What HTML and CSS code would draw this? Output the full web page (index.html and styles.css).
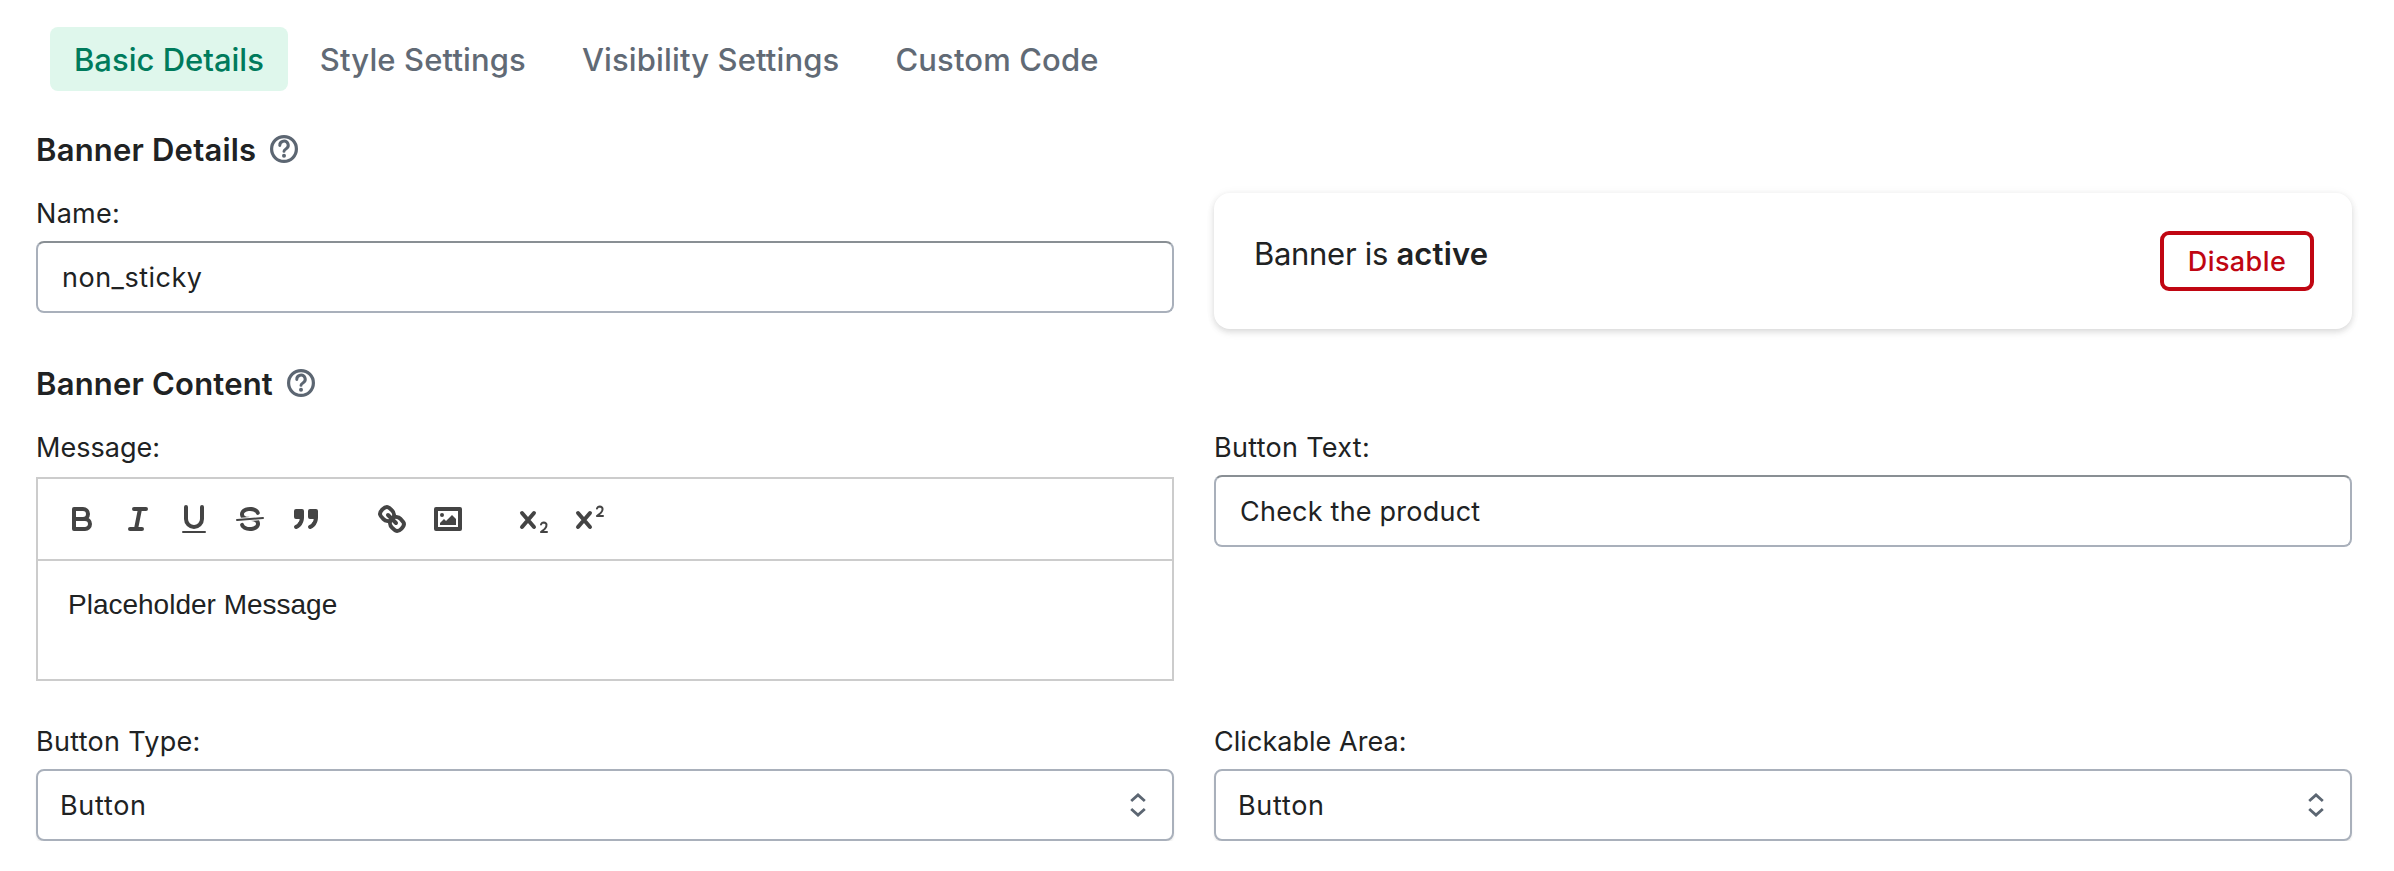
FILE: index.html
```
<!DOCTYPE html>
<html lang="en">
<head>
<meta charset="utf-8">
<title>Banner settings</title>
<link rel="stylesheet" href="styles.css">
</head>
<body>
<svg width="0" height="0" class="defs" aria-hidden="true">
  <symbol id="help" viewBox="0 0 20 20">
    <circle cx="10" cy="10" r="6.2" fill="none" stroke="currentColor" stroke-width="1.6"/>
    <path d="M7.9 8.2a2.1 2.05 0 1 1 3.2 1.65c-.7.45-1.1.75-1.1 1.3" fill="none" stroke="currentColor" stroke-width="1.5" stroke-linecap="round"/>
    <circle cx="10" cy="13.4" r="1" fill="currentColor"/>
  </symbol>
  <symbol id="updown" viewBox="0 0 16 24">
    <path d="M1.2 8 8 1.9 14.8 8M1.2 16 8 22.1 14.8 16" fill="none" stroke="currentColor" stroke-width="2.8"/>
  </symbol>
</svg>
<main class="page">
  <nav class="tabs">
    <a class="tab tab-active">Basic Details</a>
    <a class="tab">Style Settings</a>
    <a class="tab">Visibility Settings</a>
    <a class="tab">Custom Code</a>
  </nav>

  <section class="section">
    <h2 class="heading">Banner Details <svg class="help"><use href="#help"/></svg></h2>
    <div class="grid">
      <div class="field">
        <div class="label">Name:</div>
        <div class="input input-name">non_sticky</div>
      </div>
      <div class="card">
        <p class="status"><span>Banner is </span><strong>active</strong></p>
        <button class="disable" type="button">Disable</button>
      </div>
    </div>
  </section>

  <section class="section section-content">
    <h2 class="heading">Banner Content <svg class="help"><use href="#help"/></svg></h2>
    <div class="grid grid-rows">
      <div class="field">
        <div class="label label-tight">Message:</div>
        <div class="editor">
          <div class="toolbar">
            <div class="group">
              <span class="tool"><svg viewBox="0 0 18 18"><path class="stroke" d="M5,4H9.5A2.5,2.5,0,0,1,12,6.5v0A2.5,2.5,0,0,1,9.5,9H5Z"/><path class="stroke" d="M5,9h5.5A2.5,2.5,0,0,1,13,11.5v0A2.5,2.5,0,0,1,10.5,14H5Z"/></svg></span>
              <span class="tool"><svg viewBox="0 0 18 18"><path class="stroke" d="M7 4H13M5 14H11M8 14 10 4"/></svg></span>
              <span class="tool"><svg viewBox="0 0 18 18"><path class="stroke" d="M5,3V9a4.012,4.012,0,0,0,4,4H9a4.012,4.012,0,0,0,4-4V3"/><rect class="fill" x="3" y="15" width="12" height="1" rx=".5"/></svg></span>
              <span class="tool"><svg viewBox="0 0 18 18"><path class="stroke thin" d="M15.5 8.5 2.5 9.5"/><path class="fill" d="M9.007,8C6.542,7.791,6,7.519,6,6.5,6,5.792,7.283,5,9,5c1.571,0,2.765.679,2.969,1.309a1,1,0,0,0,1.9-.617C13.356,4.106,11.354,3,9,3,6.2,3,4,4.538,4,6.5a3.2,3.2,0,0,0,.5,1.843Z"/><path class="fill" d="M8.984,10C11.457,10.208,12,10.479,12,11.5c0,0.708-1.283,1.5-3,1.5-1.571,0-2.765-.679-2.969-1.309a1,1,0,1,0-1.9.617C4.644,13.894,6.646,15,9,15c2.8,0,5-1.538,5-3.5a3.2,3.2,0,0,0-.5-1.843Z"/></svg></span>
              <span class="tool"><svg viewBox="0 0 18 18"><rect class="solid" x="4" y="5" width="3" height="3"/><rect class="solid" x="11" y="5" width="3" height="3"/><path class="solid" d="M7,8c0,4.031-3,5-3,5"/><path class="solid" d="M14,8c0,4.031-3,5-3,5"/></svg></span>
            </div>
            <div class="group">
              <span class="tool"><svg viewBox="0 0 18 18"><path class="stroke" d="M7 7 11 11"/><path class="stroke" d="M8.9,4.577a3.476,3.476,0,0,1,.36,4.679A3.476,3.476,0,0,1,4.577,8.9C3.185,7.5,2.035,6.4,4.217,4.217S7.5,3.185,8.9,4.577Z"/><path class="stroke" d="M13.423,9.1a3.476,3.476,0,0,0-4.679-.36,3.476,3.476,0,0,0,.36,4.679c1.392,1.392,2.5,2.542,4.679.36S14.815,10.5,13.423,9.1Z"/></svg></span>
              <span class="tool"><svg viewBox="0 0 18 18"><rect class="stroke" x="3" y="4" width="12" height="10"/><circle class="fill" cx="6" cy="7" r="1"/><polygon class="fill" points="5 12 5 11 7 9 8 10 11 7 13 9 13 12"/></svg></span>
            </div>
            <div class="group">
              <span class="tool"><svg viewBox="0 0 18 18"><path class="stroke" d="M3 6 9 13M9 6 3 13"/><path class="stroke thin" d="M12.5 11.8c.2-.7.7-1.1 1.4-1.1 1.7.1 1.7 1.9.6 3.1-.6.7-1.3 1.1-2 1.7h3"/></svg></span>
              <span class="tool"><svg viewBox="0 0 18 18"><path class="stroke" d="M3 6 9 13M9 6 3 13"/><path class="stroke thin" d="M12.5 3.8c.2-.7.7-1.1 1.4-1.1 1.7.1 1.7 1.9.6 3.1-.6.7-1.3 1.1-2 1.7h3"/></svg></span>
            </div>
          </div>
          <div class="message">Placeholder Message</div>
        </div>
      </div>
      <div class="field">
        <div class="label">Button Text:</div>
        <div class="input">Check the product</div>
      </div>
      <div class="field">
        <div class="label">Button Type:</div>
        <div class="select">Button <svg class="updown"><use href="#updown"/></svg></div>
      </div>
      <div class="field">
        <div class="label label-tight">Clickable Area:</div>
        <div class="select">Button <svg class="updown"><use href="#updown"/></svg></div>
      </div>
    </div>
  </section>
</main>
</body>
</html>
```
FILE: styles.css
```
* { box-sizing: border-box; }
body { margin: 0; background: #fff; color: #202223; font-family: Inter, sans-serif; }
.defs { display: block; }
.page { padding: 27px 42px 0 36px; }

.tabs { display: flex; gap: 8px; padding-left: 14px; }
.tab { height: 64px; padding: 0 24px; line-height: 66px; border-radius: 8px; font-size: 31px; font-weight: 500; letter-spacing: .13px; color: #616a75; }
.tab-active { letter-spacing: 0; background: #dff7ec; color: #007b5c; }

.section { margin-top: 39px; }
.section-content { margin-top: 35px; }
.heading { display: flex; align-items: center; gap: 8px; height: 40px; margin: 0 0 23px; font-size: 31px; font-weight: 600; line-height: 40px; letter-spacing: .2px; }
.help { width: 40px; height: 40px; margin-top: -2px; color: #5c6672; }

.grid { display: grid; grid-template-columns: 1138px 1138px; column-gap: 40px; }
.grid-rows { row-gap: 40px; }
.label { height: 40px; margin-bottom: 8px; font-size: 27px; line-height: 42px; letter-spacing: .3px; }
.label-tight { letter-spacing: .04px; }

.input, .select { height: 72px; border: 2px solid #a9b0bb; border-radius: 8px; background: #fff; font-size: 27px; line-height: 70px; }
.input { padding: 0 24px; border-top-color: #898f94; letter-spacing: .22px; }
.input-name { letter-spacing: .5px; }
.select { display: flex; justify-content: space-between; padding: 0 26px 0 22px; letter-spacing: .7px; box-shadow: 0 2px 2px rgba(0, 0, 0, .08); }
.updown { width: 16px; height: 24px; margin-top: 22px; color: #5c6672; }

.card { display: flex; justify-content: space-between; height: 136px; padding: 38px 38px 0 40px; border-radius: 16px; background: #fff; box-shadow: 0 0 10px rgba(23, 24, 24, .05), 0 3px 6px rgba(0, 0, 0, .1), 0 4px 12px rgba(0, 0, 0, .03); }
.status { margin: 3px 0 0; font-size: 31px; line-height: 40px; letter-spacing: -.3px; white-space: pre; }
.status strong { font-weight: 600; letter-spacing: .15px; }
.disable { width: 154px; height: 60px; padding: 2px 0 0; border: 4px solid #c00612; border-radius: 9px; background: #fff; color: #c00612; font: 500 27px/50px Inter, sans-serif; letter-spacing: .4px; }

.editor { margin-top: 10px; border: 2px solid #ccc; }
.toolbar { display: flex; gap: 30px; height: 82px; padding: 16px; border-bottom: 2px solid #ccc; }
.group { display: flex; }
.tool { width: 56px; height: 48px; padding: 6px 10px; }
.tool svg { display: block; width: 36px; height: 36px; }
.stroke { fill: none; stroke: #444; stroke-width: 2; stroke-linecap: round; stroke-linejoin: round; }
.solid { fill: #444; stroke: #444; stroke-width: 2; stroke-linecap: round; stroke-linejoin: round; }
.fill { fill: #444; }
.thin { stroke-width: 1; }
.message { height: 118px; padding: 24px 30px; font-family: "Liberation Sans", Arial, sans-serif; font-size: 28px; line-height: 40px; letter-spacing: 0; }
```
